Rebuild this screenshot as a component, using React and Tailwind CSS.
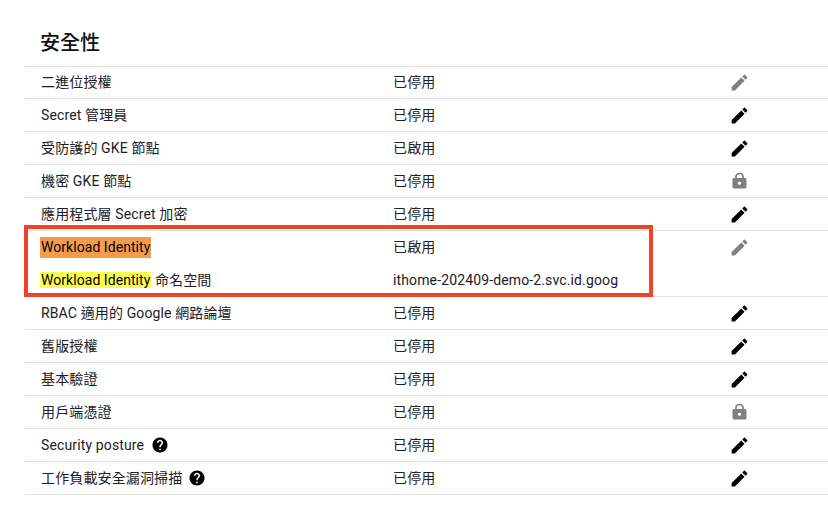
const EDIT_PATH =
  "M3 17.25V21h3.75L17.81 9.94l-3.75-3.75L3 17.25zM20.71 7.04c.39-.39.39-1.02 0-1.41l-2.34-2.34c-.39-.39-1.02-.39-1.41 0l-1.83 1.83 3.75 3.75 1.83-1.83z";
const LOCK_PATH =
  "M18 8h-1V6c0-2.76-2.24-5-5-5S7 3.24 7 6v2H6c-1.1 0-2 .9-2 2v10c0 1.1.9 2 2 2h12c1.1 0 2-.9 2-2V10c0-1.1-.9-2-2-2zm-6 9c-1.1 0-2-.9-2-2s.9-2 2-2 2 .9 2 2-.9 2-2 2zm3.1-9H8.9V6c0-1.71 1.39-3.1 3.1-3.1 1.71 0 3.1 1.39 3.1 3.1v2z";
const HELP_PATH =
  "M12 2C6.48 2 2 6.48 2 12s4.48 10 10 10 10-4.48 10-10S17.52 2 12 2zm1 17h-2v-2h2v2zm2.07-7.75l-.9.92C13.45 12.9 13 13.5 13 15h-2v-.5c0-1.1.45-2.1 1.17-2.83l1.24-1.26c.37-.36.59-.86.59-1.41 0-1.1-.9-2-2-2s-2 .9-2 2H8c0-2.21 1.79-4 4-4s4 1.79 4 4c0 .88-.36 1.68-.93 2.25z";

function Icon({ path, className, stretch = false }) {
  return (
    <svg
      viewBox="0 0 24 24"
      fill="currentColor"
      preserveAspectRatio={stretch ? "none" : undefined}
      className={className}
    >
      <path d={path} />
    </svg>
  );
}

function Action({ type }) {
  if (type === "edit") {
    return <Icon path={EDIT_PATH} className="h-[21px] w-[21px] text-black" />;
  }
  if (type === "edit-off") {
    return <Icon path={EDIT_PATH} className="h-[21px] w-[21px] text-[#808080]" />;
  }
  if (type === "lock") {
    return <Icon path={LOCK_PATH} stretch className="h-[18px] w-[21px] text-[#808080]" />;
  }
  return null;
}

function Row({ label, value, action, border = true, height = "h-[33px]" }) {
  return (
    <div
      className={`grid grid-cols-[369px_327px_1fr] items-center ${height} ${
        border ? "border-b border-[#e0e0e0]" : ""
      }`}
    >
      <div className="flex items-center pl-4 tracking-[0.13px]">{label}</div>
      <div className="-ml-px tracking-[0.13px]">{value}</div>
      <div className="flex pl-[8px]">
        <Action type={action} />
      </div>
    </div>
  );
}

export default function App() {
  return (
    <div className="relative h-[513px] w-[828px] overflow-hidden bg-white pl-[25px] font-['Roboto','Noto_Sans_CJK_TC',sans-serif] text-[14px] text-[#202124]">
      <h2 className="flex h-[66px] items-end pb-[9px] pl-[15px] text-[20px] font-medium leading-7 text-[#111]">
        安全性
      </h2>
      <div className="border-t border-[#e0e0e0]">
        <Row height="h-[32px]" label="二進位授權" value="已停用" action="edit-off" />
        <Row label="Secret 管理員" value="已停用" action="edit" />
        <Row label="受防護的 GKE 節點" value="已啟用" action="edit" />
        <Row label="機密 GKE 節點" value="已停用" action="lock" />
        <Row label="應用程式層 Secret 加密" value="已停用" action="edit" />
        <Row
          border={false}
          label={<span className="-ml-px bg-[#f59b4c] px-px tracking-[0.05px] text-black">Workload Identity</span>}
          value="已啟用"
          action="edit-off"
        />
        <Row
          label={
            <span>
              <span className="-ml-px bg-[#fdfd50] px-px tracking-[0.05px] text-black">Workload Identity</span> 命名空間
            </span>
          }
          value="ithome-202409-demo-2.svc.id.goog"
        />
        <Row label="RBAC 適用的 Google 網路論壇" value="已停用" action="edit" />
        <Row label="舊版授權" value="已停用" action="edit" />
        <Row label="基本驗證" value="已停用" action="edit" />
        <Row label="用戶端憑證" value="已停用" action="lock" />
        <Row
          label={
            <>
              Security posture
              <Icon path={HELP_PATH} className="ml-[7px] h-[18px] w-[18px] text-black" />
            </>
          }
          value="已停用"
          action="edit"
        />
        <Row
          label={
            <>
              工作負載安全漏洞掃描
              <Icon path={HELP_PATH} className="ml-[6px] h-[18px] w-[18px] text-black" />
            </>
          }
          value="已停用"
          action="edit"
        />
      </div>
      <div className="pointer-events-none absolute left-[24px] top-[225px] h-[72px] w-[629px] border-[4px] border-[#ee4426]" />
    </div>
  );
}
